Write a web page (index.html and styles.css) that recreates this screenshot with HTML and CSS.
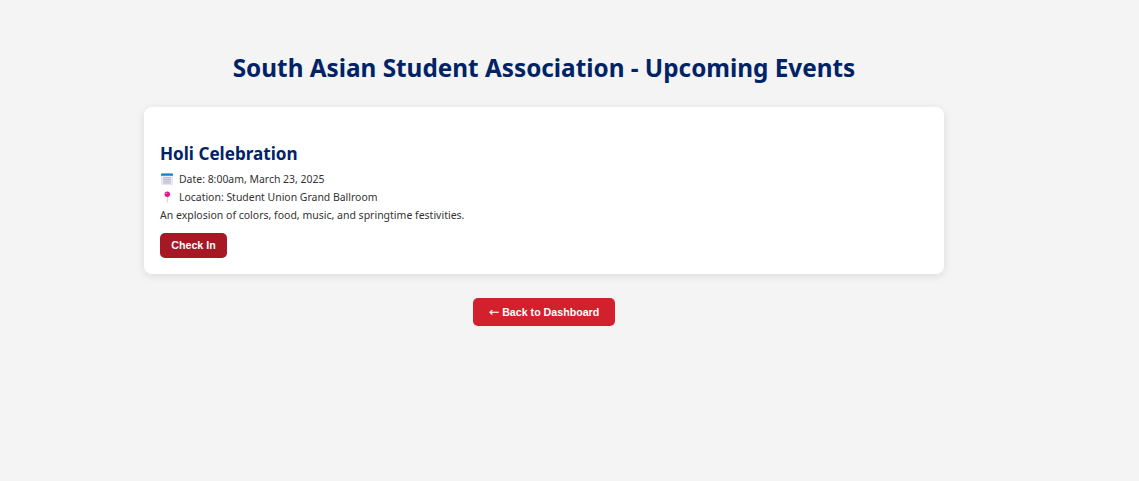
FILE: index.html
```html
<!DOCTYPE html>
<html lang="en">
<head>
    <meta charset="UTF-8">
    <meta name="viewport" content="width=device-width, initial-scale=1.0">
    <title>Upcoming Events</title>
    <link rel="stylesheet" href="styles.css">
</head>
<body>

<div class="container">
    <h1>South Asian Student Association - Upcoming Events</h1>

    <!-- Event Card -->
    <div class="event-card">
        <h3>Holi Celebration</h3>
        <p class="icon-row">
            <svg class="icon" viewBox="0 0 12 12" aria-hidden="true">
                <rect x="0.25" y="0.5" width="11.5" height="11.25" rx="1.2" fill="#eeedf6" stroke="#cfd0e2" stroke-width="0.5"/>
                <path d="M0 2.8V1.6A1.2 1.2 0 0 1 1.2 0.4h9.6A1.2 1.2 0 0 1 12 1.6v1.2z" fill="#1481c8"/>
                <path d="M2 4.6h8M2 6.4h8M2 8.2h8M2 10h8M3 4v6.6M5 4v6.6M7 4v6.6M9 4v6.6" stroke="#b2b3d0" stroke-width="0.7"/>
            </svg>
            <span>Date: 8:00am, March 23, 2025</span>
        </p>
        <p class="icon-row">
            <svg class="icon" viewBox="0 0 12 12" aria-hidden="true">
                <path d="M6.3 5v6.6" stroke="#cfcfd6" stroke-width="1"/>
                <circle cx="6.3" cy="3.2" r="2.7" fill="#ea128f"/>
                <circle cx="5.4" cy="2.3" r="0.7" fill="#f98ccb"/>
            </svg>
            <span>Location: Student Union Grand Ballroom</span>
        </p>
        <p>An explosion of colors, food, music, and springtime festivities.</p>
        <button class="check-in">Check In</button>
    </div>

    <a class="back-link" href="#"><span class="arrow">←</span> Back to Dashboard</a>
</div>

</body>
</html>
```

FILE: styles.css
```css
/* Global Styles */
body {
    font-family: 'Noto Sans', sans-serif;
    background-color: #F4F4F4;
    margin: 0;
    padding: 0;
    color: #333;
}
.container {
    width: 1088px;
    display: flex;
    flex-direction: column;
    align-items: center;
    padding-top: 50px;
}
h1 {
    font-size: 24.3px;
    line-height: 36px;
    color: #002366;
    margin: 0 0 21px;
    text-align: center;
}

/* Event Card */
.event-card {
    box-sizing: border-box;
    width: 800px;
    height: 167px;
    padding: 35px 16px 16px;
    background-color: #FFF;
    border-radius: 8px;
    box-shadow: 0 2px 8px rgba(0, 0, 0, 0.1);
}
.event-card h3 {
    font-size: 17.1px;
    line-height: 24px;
    color: #002366;
    margin: 0 0 4px;
}
.event-card p {
    font-size: 10.5px;
    line-height: 18px;
    color: #333;
    margin: 0;
}
.event-card .icon-row {
    display: flex;
    align-items: center;
    gap: 6px;
    font-size: 10.45px;
}
.icon {
    width: 12px;
    height: 12px;
    margin-left: 1px;
}
.check-in {
    display: block;
    margin-top: 9px;
    width: 67px;
    height: 25px;
    padding: 0 0 1px;
    border: 0;
    border-radius: 5px;
    background-color: #A71825;
    color: #FFF;
    font-family: 'Liberation Sans', Arial, sans-serif;
    font-size: 10.67px;
    font-weight: bold;
}

/* Back Link */
.back-link {
    margin-top: 24px;
    width: 142px;
    height: 28px;
    line-height: 28px;
    text-align: center;
    border-radius: 5px;
    background-color: #D2202C;
    color: #FFF;
    font-family: 'Liberation Sans', Arial, sans-serif;
    font-size: 10.67px;
    font-weight: bold;
    text-decoration: none;
}
.arrow {
    font-family: 'DejaVu Sans', sans-serif;
    font-weight: normal;
    font-size: 12.5px;
}
```
